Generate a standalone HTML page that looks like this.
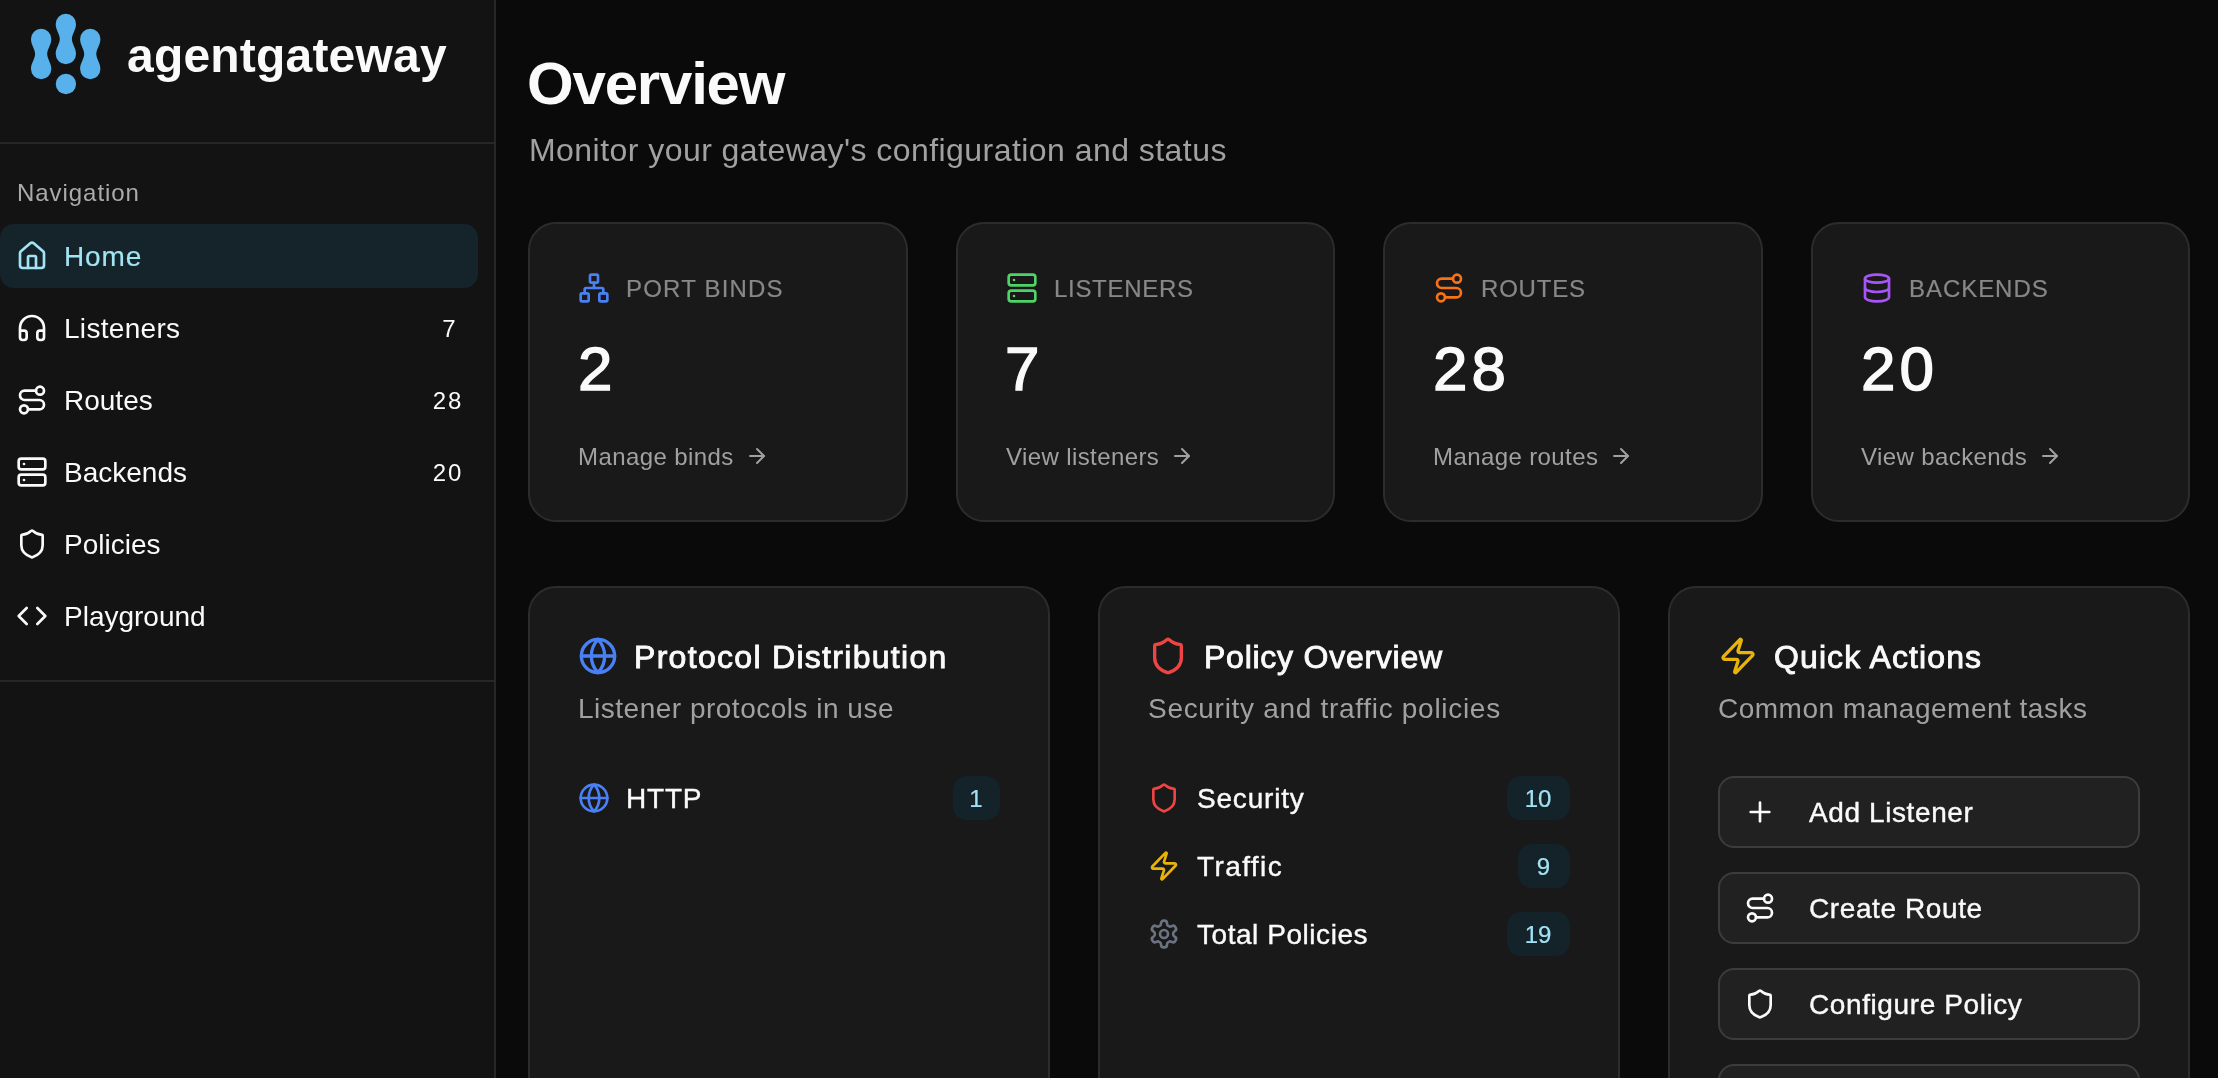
<!DOCTYPE html>
<html><head><meta charset="utf-8">
<style>
*{box-sizing:border-box;margin:0;padding:0}
html,body{width:2218px;height:1078px;overflow:hidden;background:#0a0a0a;-webkit-font-smoothing:antialiased;font-family:"Liberation Sans",sans-serif;color:#fafafa}
.abs{position:absolute}
svg.i{position:absolute;fill:none;stroke:currentColor;stroke-width:2;stroke-linecap:round;stroke-linejoin:round}
#side{position:absolute;left:0;top:0;width:496px;height:1078px;background:#131313;border-right:2px solid #272727}
.hline{position:absolute;left:0;width:494px;height:2px;background:#272727}
.t{position:absolute;white-space:nowrap;line-height:1}
.nav{position:absolute;left:0;width:478px;height:64px;border-radius:14px}
.nav.active{background:#14242a;color:#a3e4f4}
.card{position:absolute;background:#191919;border:2px solid #2c2c2c;border-radius:28px}
.badge{position:absolute;height:44px;border-radius:14px;background:#14232a;color:#a0e2f4;font-size:24px;line-height:46px;text-align:center;-webkit-text-stroke:0.2px #a0e2f4;text-indent:-1px}
.lab{font-size:24px;color:#888;-webkit-text-stroke:0.2px #888;letter-spacing:1.2px}
.num{font-size:62px;font-weight:400;letter-spacing:1.5px;-webkit-text-stroke:1.4px #fafafa}
.lnk{font-size:24px;color:#a1a1a1;letter-spacing:0.4px}
.ttl{font-size:32px;font-weight:400;letter-spacing:1.1px;-webkit-text-stroke:0.9px #fafafa}
.dsc{font-size:28px;color:#a1a1a1;letter-spacing:0.5px}
.rlab{font-size:28px;letter-spacing:0.8px;-webkit-text-stroke:0.4px #fafafa}
.blab{font-size:28px;letter-spacing:0.6px;-webkit-text-stroke:0.4px #fafafa}
.btn{position:absolute;left:48px;width:422px;height:72px;background:#212121;border:2px solid #3c3c3c;border-radius:16px}
</style></head>
<body><div id="root" style="position:absolute;left:0;top:0;width:2218px;height:1078px;will-change:transform">
<div id="side">
  <!-- logo -->
  <svg class="abs" style="left:0;top:0" width="120" height="110" viewBox="0 0 120 110">
    <g fill="#58b1ea">
      <path d="M31 39 A10.15 10.15 0 0 1 51.3 39 C51.3 45 47.2 49 47.2 54 C47.2 59 51.3 63 51.3 69 A10.15 10.15 0 0 1 31 69 C31 63 35.1 59 35.1 54 C35.1 49 31 45 31 39 Z"/>
      <path transform="translate(24.7,-15)" d="M31 39 A10.15 10.15 0 0 1 51.3 39 C51.3 45 47.2 49 47.2 54 C47.2 59 51.3 63 51.3 69 A10.15 10.15 0 0 1 31 69 C31 63 35.1 59 35.1 54 C35.1 49 31 45 31 39 Z"/>
      <path transform="translate(49.1,0)" d="M31 39 A10.15 10.15 0 0 1 51.3 39 C51.3 45 47.2 49 47.2 54 C47.2 59 51.3 63 51.3 69 A10.15 10.15 0 0 1 31 69 C31 63 35.1 59 35.1 54 C35.1 49 31 45 31 39 Z"/>
      <circle cx="65.9" cy="84" r="10.15"/>
    </g>
  </svg>
  <div class="t" style="left:127px;top:32px;font-size:48px;font-weight:700;letter-spacing:0.2px">agentgateway</div>
  <div class="hline" style="top:142px"></div>
  <div class="t" style="left:17px;top:181px;font-size:24px;color:#ababab;letter-spacing:0.95px">Navigation</div>

  <div class="nav active" style="top:224px">
    <svg class="i" style="left:16px;top:16px" width="32" height="32" viewBox="0 0 24 24"><path d="M15 21v-8a1 1 0 0 0-1-1h-4a1 1 0 0 0-1 1v8"/><path d="M3 10a2 2 0 0 1 .709-1.528l7-5.999a2 2 0 0 1 2.582 0l7 5.999A2 2 0 0 1 21 10v9a2 2 0 0 1-2 2H5a2 2 0 0 1-2-2z"/></svg>
    <div class="t" style="left:64px;top:19px;font-size:28px;letter-spacing:0.9px;-webkit-text-stroke:0.15px #a3e4f4">Home</div>
  </div>
  <div class="nav" style="top:296px">
    <svg class="i" style="left:16px;top:16px" width="32" height="32" viewBox="0 0 24 24"><path d="M3 14h3a2 2 0 0 1 2 2v3a2 2 0 0 1-2 2H5a2 2 0 0 1-2-2v-7a9 9 0 0 1 18 0v7a2 2 0 0 1-2 2h-1a2 2 0 0 1-2-2v-3a2 2 0 0 1 2-2h3"/></svg>
    <div class="t" style="left:64px;top:19px;font-size:28px;letter-spacing:0.3px">Listeners</div>
    <div class="t" style="left:429px;top:21px;width:40px;text-align:center;font-size:24px">7</div>
  </div>
  <div class="nav" style="top:368px">
    <svg class="i" style="left:16px;top:16px" width="32" height="32" viewBox="0 0 24 24"><circle cx="6" cy="19" r="3"/><path d="M9 19h8.5a3.5 3.5 0 0 0 0-7h-11a3.5 3.5 0 0 1 0-7H15"/><circle cx="18" cy="5" r="3"/></svg>
    <div class="t" style="left:64px;top:19px;font-size:28px">Routes</div>
    <div class="t" style="left:428px;top:21px;width:40px;text-align:center;font-size:24px;letter-spacing:2px">28</div>
  </div>
  <div class="nav" style="top:440px">
    <svg class="i" style="left:16px;top:16px" width="32" height="32" viewBox="0 0 24 24"><rect width="20" height="8" x="2" y="2" rx="2" ry="2"/><rect width="20" height="8" x="2" y="14" rx="2" ry="2"/><line x1="6" x2="6.01" y1="6" y2="6"/><line x1="6" x2="6.01" y1="18" y2="18"/></svg>
    <div class="t" style="left:64px;top:19px;font-size:28px">Backends</div>
    <div class="t" style="left:428px;top:21px;width:40px;text-align:center;font-size:24px;letter-spacing:2px">20</div>
  </div>
  <div class="nav" style="top:512px">
    <svg class="i" style="left:16px;top:16px" width="32" height="32" viewBox="0 0 24 24"><path d="M20 13c0 5-3.500 7.500-7.660 8.950a1 1 0 0 1-.670-.010C7.500 20.500 4 18 4 13V6a1 1 0 0 1 1-1c2 0 4.500-1.200 6.240-2.720a1.170 1.170 0 0 1 1.520 0C14.510 3.810 17 5 19 5a1 1 0 0 1 1 1z"/></svg>
    <div class="t" style="left:64px;top:19px;font-size:28px">Policies</div>
  </div>
  <div class="nav" style="top:584px">
    <svg class="i" style="left:16px;top:16px" width="32" height="32" viewBox="0 0 24 24"><polyline points="16 18 22 12 16 6"/><polyline points="8 6 2 12 8 18"/></svg>
    <div class="t" style="left:64px;top:19px;font-size:28px">Playground</div>
  </div>
  <div class="hline" style="top:680px"></div>
</div>

<!-- MAIN -->
<div class="t" style="left:527px;top:54px;font-size:60px;font-weight:700;letter-spacing:-1.2px">Overview</div>
<div class="t" style="left:529px;top:134px;font-size:32px;color:#a1a1a1;letter-spacing:0.45px">Monitor your gateway's configuration and status</div>

<!-- STATS -->
<div class="card" style="left:528px;top:222px;width:380px;height:300px">
  <svg class="i" style="left:48px;top:48px;color:#4a80f6" width="32" height="32" viewBox="0 0 24 24"><rect x="16" y="16" width="6" height="6" rx="1"/><rect x="2" y="16" width="6" height="6" rx="1"/><rect x="9" y="2" width="6" height="6" rx="1"/><path d="M5 16v-3a1 1 0 0 1 1-1h12a1 1 0 0 1 1 1v3"/><path d="M12 12V8"/></svg>
  <div class="t lab" style="left:96px;top:53px">PORT BINDS</div>
  <div class="t num" style="left:48px;top:114px">2</div>
  <div class="t lnk" style="left:48px;top:217px">Manage binds<svg style="position:relative;top:3px;margin-left:11px;fill:none;stroke:currentColor;stroke-width:2;stroke-linecap:round;stroke-linejoin:round" width="24" height="24" viewBox="0 0 24 24"><path d="M5 12h14"/><path d="m12 5 7 7-7 7"/></svg></div>
</div>
<div class="card" style="left:956px;top:222px;width:379px;height:300px">
  <svg class="i" style="left:48px;top:48px;color:#4fd468" width="32" height="32" viewBox="0 0 24 24"><rect width="20" height="8" x="2" y="2" rx="2" ry="2"/><rect width="20" height="8" x="2" y="14" rx="2" ry="2"/><line x1="6" x2="6.01" y1="6" y2="6"/><line x1="6" x2="6.01" y1="18" y2="18"/></svg>
  <div class="t lab" style="left:96px;top:53px;letter-spacing:0.7px">LISTENERS</div>
  <div class="t num" style="left:47px;top:114px">7</div>
  <div class="t lnk" style="left:48px;top:217px">View listeners<svg style="position:relative;top:3px;margin-left:11px;fill:none;stroke:currentColor;stroke-width:2;stroke-linecap:round;stroke-linejoin:round" width="24" height="24" viewBox="0 0 24 24"><path d="M5 12h14"/><path d="m12 5 7 7-7 7"/></svg></div>
</div>
<div class="card" style="left:1383px;top:222px;width:380px;height:300px">
  <svg class="i" style="left:48px;top:48px;color:#f97316" width="32" height="32" viewBox="0 0 24 24"><circle cx="6" cy="19" r="3"/><path d="M9 19h8.5a3.5 3.5 0 0 0 0-7h-11a3.5 3.5 0 0 1 0-7H15"/><circle cx="18" cy="5" r="3"/></svg>
  <div class="t lab" style="left:96px;top:53px;letter-spacing:0.8px">ROUTES</div>
  <div class="t num" style="left:48px;top:114px;letter-spacing:4px">28</div>
  <div class="t lnk" style="left:48px;top:217px">Manage routes<svg style="position:relative;top:3px;margin-left:11px;fill:none;stroke:currentColor;stroke-width:2;stroke-linecap:round;stroke-linejoin:round" width="24" height="24" viewBox="0 0 24 24"><path d="M5 12h14"/><path d="m12 5 7 7-7 7"/></svg></div>
</div>
<div class="card" style="left:1811px;top:222px;width:379px;height:300px">
  <svg class="i" style="left:48px;top:48px;color:#a855f7" width="32" height="32" viewBox="0 0 24 24"><ellipse cx="12" cy="5" rx="9" ry="3"/><path d="M3 5V19A9 3 0 0 0 21 19V5"/><path d="M3 12A9 3 0 0 0 21 12"/></svg>
  <div class="t lab" style="left:96px;top:53px;letter-spacing:0.95px">BACKENDS</div>
  <div class="t num" style="left:48px;top:114px;letter-spacing:4px">20</div>
  <div class="t lnk" style="left:48px;top:217px">View backends<svg style="position:relative;top:3px;margin-left:11px;fill:none;stroke:currentColor;stroke-width:2;stroke-linecap:round;stroke-linejoin:round" width="24" height="24" viewBox="0 0 24 24"><path d="M5 12h14"/><path d="m12 5 7 7-7 7"/></svg></div>
</div>


<!-- BOTTOM CARDS -->
<div class="card" style="left:528px;top:586px;width:522px;height:560px">
  <svg class="i" style="left:48px;top:48px;color:#4a80f6" width="40" height="40" viewBox="0 0 24 24"><circle cx="12" cy="12" r="10"/><path d="M12 2a14.5 14.5 0 0 0 0 20 14.5 14.5 0 0 0 0-20"/><path d="M2 12h20"/></svg>
  <div class="t ttl" style="left:104px;top:53px;letter-spacing:1.3px">Protocol Distribution</div>
  <div class="t dsc" style="left:48px;top:107px">Listener protocols in use</div>
  <div class="abs" style="left:48px;top:188px;width:422px;height:44px">
    <svg class="i" style="left:0px;top:6px;color:#4a80f6" width="32" height="32" viewBox="0 0 24 24"><circle cx="12" cy="12" r="10"/><path d="M12 2a14.5 14.5 0 0 0 0 20 14.5 14.5 0 0 0 0-20"/><path d="M2 12h20"/></svg>
    <div class="t rlab" style="left:48px;top:9px">HTTP</div>
    <div class="badge" style="right:0;top:0;width:47px">1</div>
  </div>
</div>
<div class="card" style="left:1098px;top:586px;width:522px;height:560px">
  <svg class="i" style="left:48px;top:48px;color:#ef4444" width="40" height="40" viewBox="0 0 24 24"><path d="M20 13c0 5-3.5 7.5-7.66 8.95a1 1 0 0 1-.67-.01C7.5 20.5 4 18 4 13V6a1 1 0 0 1 1-1c2 0 4.5-1.2 6.24-2.72a1.17 1.17 0 0 1 1.52 0C14.51 3.81 17 5 19 5a1 1 0 0 1 1 1z"/></svg>
  <div class="t ttl" style="left:104px;top:53px;letter-spacing:0.75px">Policy Overview</div>
  <div class="t dsc" style="left:48px;top:107px;letter-spacing:0.7px">Security and traffic policies</div>
  <div class="abs" style="left:48px;top:188px;width:422px;height:44px">
    <svg class="i" style="left:0px;top:6px;color:#ef4444" width="32" height="32" viewBox="0 0 24 24"><path d="M20 13c0 5-3.5 7.5-7.66 8.95a1 1 0 0 1-.67-.01C7.5 20.5 4 18 4 13V6a1 1 0 0 1 1-1c2 0 4.5-1.2 6.24-2.72a1.17 1.17 0 0 1 1.52 0C14.51 3.81 17 5 19 5a1 1 0 0 1 1 1z"/></svg>
    <div class="t rlab" style="left:49px;top:9px">Security</div>
    <div class="badge" style="right:0;top:0;width:63px">10</div>
  </div>
  <div class="abs" style="left:48px;top:256px;width:422px;height:44px">
    <svg class="i" style="left:0px;top:6px;color:#eab308" width="32" height="32" viewBox="0 0 24 24"><path d="M4 14a1 1 0 0 1-.78-1.63l9.9-10.2a.5.5 0 0 1 .86.46l-1.92 6.020A1 1 0 0 0 13 10h7a1 1 0 0 1 .78 1.63l-9.9 10.2a.5.5 0 0 1-.86-.46l1.92-6.020A1 1 0 0 0 11 14z"/></svg>
    <div class="t rlab" style="left:49px;top:9px;letter-spacing:1.4px">Traffic</div>
    <div class="badge" style="right:0;top:0;width:52px">9</div>
  </div>
  <div class="abs" style="left:48px;top:324px;width:422px;height:44px">
    <svg class="i" style="left:0px;top:6px;color:#6b7280" width="32" height="32" viewBox="0 0 24 24"><path d="M12.22 2h-.44a2 2 0 0 0-2 2v.18a2 2 0 0 1-1 1.73l-.43.25a2 2 0 0 1-2 0l-.15-.08a2 2 0 0 0-2.73.73l-.22.38a2 2 0 0 0 .73 2.73l.15.1a2 2 0 0 1 1 1.72v.51a2 2 0 0 1-1 1.74l-.15.09a2 2 0 0 0-.73 2.73l.22.38a2 2 0 0 0 2.73.73l.15-.08a2 2 0 0 1 2 0l.43.25a2 2 0 0 1 1 1.73V20a2 2 0 0 0 2 2h.44a2 2 0 0 0 2-2v-.18a2 2 0 0 1 1-1.73l.43-.25a2 2 0 0 1 2 0l.15.08a2 2 0 0 0 2.73-.73l.22-.39a2 2 0 0 0-.73-2.73l-.15-.08a2 2 0 0 1-1-1.74v-.5a2 2 0 0 1 1-1.74l.15-.09a2 2 0 0 0 .73-2.73l-.22-.38a2 2 0 0 0-2.73-.73l-.15.08a2 2 0 0 1-2 0l-.43-.25a2 2 0 0 1-1-1.73V4a2 2 0 0 0-2-2z"/><circle cx="12" cy="12" r="3"/></svg>
    <div class="t rlab" style="left:49px;top:9px;letter-spacing:0.55px">Total Policies</div>
    <div class="badge" style="right:0;top:0;width:63px">19</div>
  </div>
</div>
<div class="card" style="left:1668px;top:586px;width:522px;height:560px">
  <svg class="i" style="left:48px;top:48px;color:#eab308" width="40" height="40" viewBox="0 0 24 24"><path d="M4 14a1 1 0 0 1-.78-1.63l9.9-10.2a.5.5 0 0 1 .86.46l-1.92 6.020A1 1 0 0 0 13 10h7a1 1 0 0 1 .78 1.63l-9.9 10.2a.5.5 0 0 1-.86-.46l1.92-6.020A1 1 0 0 0 11 14z"/></svg>
  <div class="t ttl" style="left:104px;top:53px;letter-spacing:1.1px">Quick Actions</div>
  <div class="t dsc" style="left:48px;top:107px">Common management tasks</div>
  <div class="btn" style="top:188px">
    <svg class="i" style="left:24px;top:18px" width="32" height="32" viewBox="0 0 24 24"><path d="M5 12h14"/><path d="M12 5v14"/></svg>
    <div class="t blab" style="left:89px;top:21px">Add Listener</div>
  </div>
  <div class="btn" style="top:284px">
    <svg class="i" style="left:24px;top:18px" width="32" height="32" viewBox="0 0 24 24"><circle cx="6" cy="19" r="3"/><path d="M9 19h8.5a3.5 3.5 0 0 0 0-7h-11a3.5 3.5 0 0 1 0-7H15"/><circle cx="18" cy="5" r="3"/></svg>
    <div class="t blab" style="left:89px;top:21px">Create Route</div>
  </div>
  <div class="btn" style="top:380px">
    <svg class="i" style="left:24px;top:18px" width="32" height="32" viewBox="0 0 24 24"><path d="M20 13c0 5-3.5 7.5-7.66 8.95a1 1 0 0 1-.67-.01C7.5 20.5 4 18 4 13V6a1 1 0 0 1 1-1c2 0 4.5-1.2 6.24-2.72a1.17 1.17 0 0 1 1.52 0C14.51 3.81 17 5 19 5a1 1 0 0 1 1 1z"/></svg>
    <div class="t blab" style="left:89px;top:21px">Configure Policy</div>
  </div>
  <div class="btn" style="top:476px">
     
    <div class="t blab" style="left:89px;top:21px"></div>
  </div>
</div>

</div></body></html>
